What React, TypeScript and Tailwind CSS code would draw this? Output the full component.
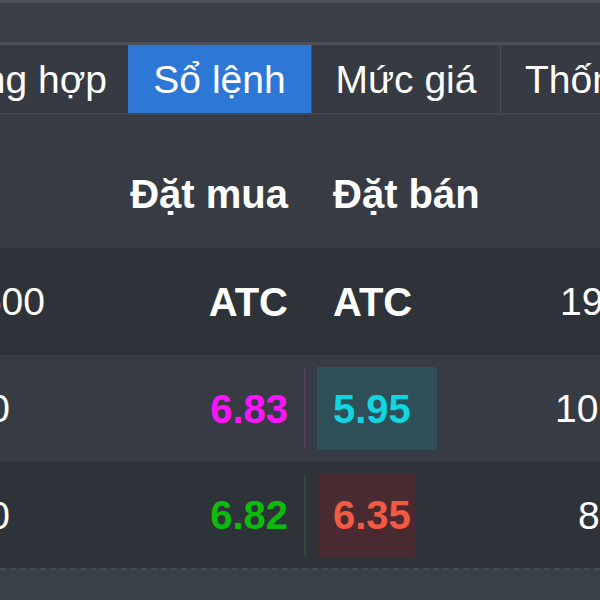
export default function App() {
  return (
    <div className="w-[600px] h-[600px] overflow-hidden bg-[#373c44] flex flex-col font-['Liberation_Sans',Arial,sans-serif] text-white">
      <div className="h-[3px] bg-[#4b5059] shrink-0" />
      <div className="h-[39px] bg-[#393e47] shrink-0" />
      <div className="h-[3px] bg-[#4a4f58] shrink-0" />
      {/* Tabs */}
      <div className="flex h-[68px] shrink-0 bg-[#363b43] text-[39px] leading-none">
        <div className="w-[128px] shrink-0 flex items-center justify-end pr-[21px] overflow-hidden">
          <span className="whitespace-nowrap shrink-0">Tổng hợp</span>
        </div>
        <div className="w-[183px] shrink-0 flex items-center justify-center bg-[#2d77d6]">
          <span className="whitespace-nowrap">Sổ lệnh</span>
        </div>
        <div className="w-[1px] shrink-0 bg-[#4a4f58]" />
        <div className="w-[188px] shrink-0 flex items-center justify-center">
          <span className="whitespace-nowrap">Mức giá</span>
        </div>
        <div className="w-[1px] shrink-0 bg-[#4a4f58]" />
        <div className="shrink-0 flex items-center pl-[24px]">
          <span className="whitespace-nowrap">Thống kê</span>
        </div>
      </div>
      <div className="h-[2px] bg-[#42474f] shrink-0" />
      {/* Header */}
      <div className="h-[133px] shrink-0 flex items-start pt-[57px] text-[40px] font-bold leading-[45px]">
        <div className="w-[288px] shrink-0 text-right whitespace-nowrap">Đặt mua</div>
        <div className="pl-[45px] whitespace-nowrap">Đặt bán</div>
      </div>
      {/* Row 1 */}
      <div className="h-[107px] shrink-0 flex items-center bg-[#2e333a] text-[39px] leading-none">
        <div className="w-[60px] shrink-0 flex justify-end pr-[15px] overflow-hidden">
          <span className="whitespace-nowrap shrink-0">1,500</span>
        </div>
        <div className="w-[228px] shrink-0 text-right font-bold text-[40px]">ATC</div>
        <div className="w-[29px] shrink-0" />
        <div className="w-[238px] shrink-0 pl-[16px] font-bold text-[40px]">ATC</div>
        <div className="pl-[5px] whitespace-nowrap">19,200</div>
      </div>
      {/* Row 2 */}
      <div className="h-[107px] shrink-0 flex items-center bg-[#373c44] text-[39px] leading-none">
        <div className="w-[60px] shrink-0 flex justify-end pr-[50px] overflow-hidden">
          <span className="whitespace-nowrap shrink-0">500</span>
        </div>
        <div className="w-[228px] shrink-0 text-right font-bold text-[40px] text-[#ff14ff]">6.83</div>
        <div className="w-[29px] shrink-0 h-[81px] flex pl-[16px]">
          <div className="w-[2px] h-full bg-[#553a5a]" />
        </div>
        <div className="w-[238px] shrink-0 flex">
          <div className="w-[120px] h-[83px] flex items-center pl-[16px] bg-[#2f5058] font-bold text-[40px] text-[#10d6e2]">
            5.95
          </div>
        </div>
        <div className="whitespace-nowrap">10,500</div>
      </div>
      {/* Row 3 */}
      <div className="h-[106px] shrink-0 flex items-center bg-[#2e333a] text-[39px] leading-none">
        <div className="w-[60px] shrink-0 flex justify-end pr-[50px] overflow-hidden">
          <span className="whitespace-nowrap shrink-0">200</span>
        </div>
        <div className="w-[228px] shrink-0 text-right font-bold text-[40px] text-[#0cbc0c]">6.82</div>
        <div className="w-[29px] shrink-0 h-[81px] flex pl-[16px]">
          <div className="w-[2px] h-full bg-[#2f4a3b]" />
        </div>
        <div className="w-[238px] shrink-0 flex">
          <div className="w-[98px] h-[83px] flex items-center pl-[16px] bg-[#4a2a31] font-bold text-[40px] text-[#f25a44]">
            6.35
          </div>
        </div>
        <div className="pl-[23px] whitespace-nowrap">8,000</div>
      </div>
      <div className="h-0 shrink-0 border-t-2 border-dashed border-[#474d56]" />
      <div className="flex-1 bg-[#3a404a]" />
    </div>
  );
}
